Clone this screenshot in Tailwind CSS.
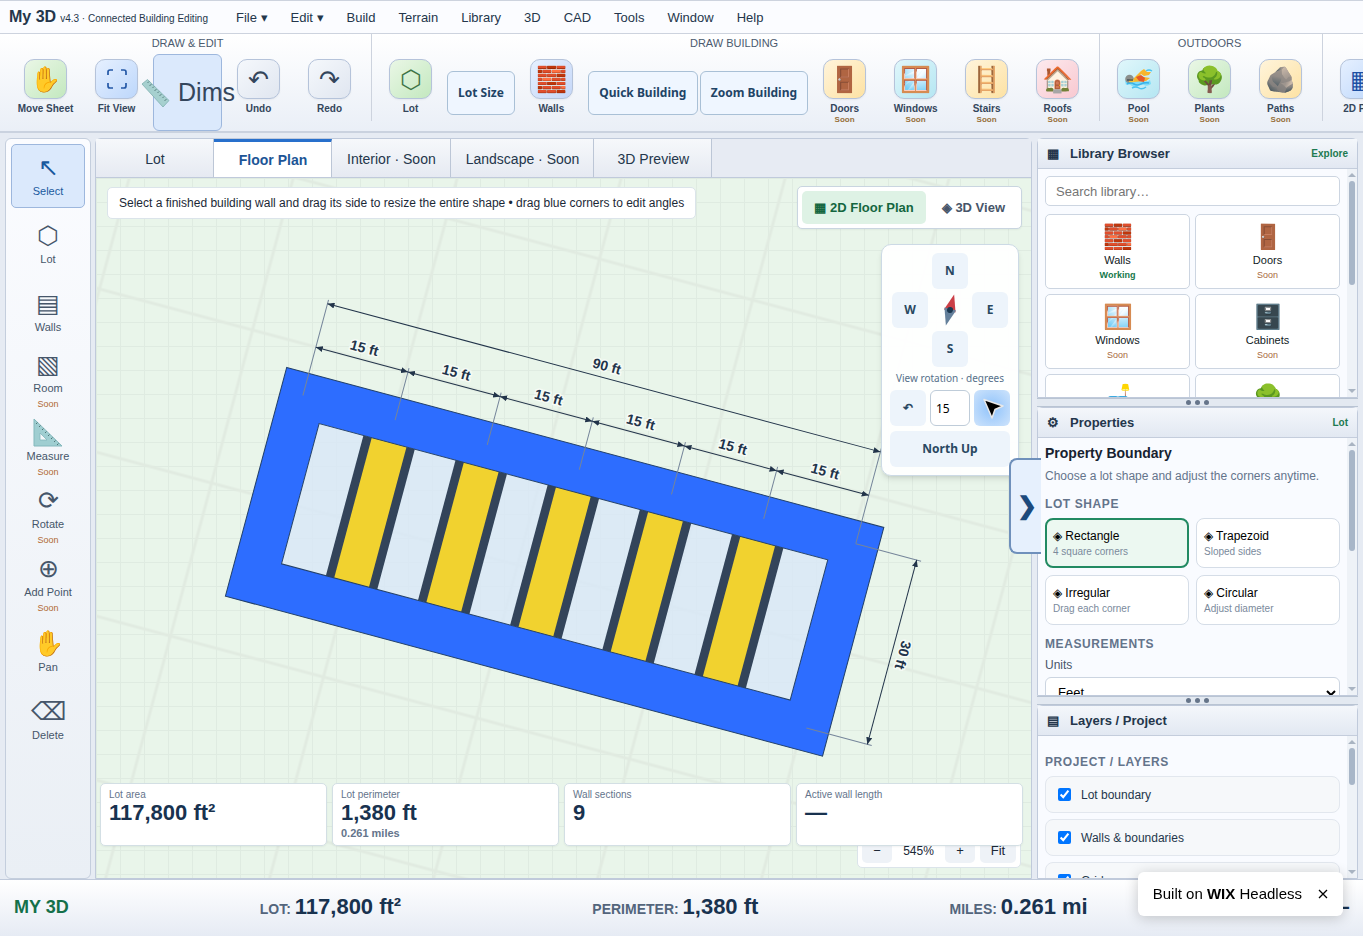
<!DOCTYPE html>
<html lang="en">
<head>
    <meta charset="UTF-8">
    <meta name="viewport" content="width=device-width, initial-scale=1.0">
    <title>My 3D</title>
    <script src="https://cdn.jsdelivr.net/npm/@tailwindcss/browser@4"></script>
</head>
<body class="h-screen flex flex-col overflow-hidden bg-[#e6ebf3] font-['Liberation_Sans',Arial,sans-serif] text-[#24364b]">

    <!-- Menu bar -->
    <header class="flex items-center h-[34px] shrink-0 border-y border-[#cdd3de] bg-[#fbfcff] pl-[9px]">
        <h1 class="text-base font-bold">My 3D</h1>
        <span class="ml-1 mt-0.5 text-[10px] whitespace-nowrap">v4.3 · Connected Building Editing</span>
        <nav class="flex gap-[23px] ml-7 mt-px text-[13px] whitespace-nowrap">
            <button>File ▾</button>
            <button>Edit ▾</button>
            <button>Build</button>
            <button>Terrain</button>
            <button>Library</button>
            <button>3D</button>
            <button>CAD</button>
            <button>Tools</button>
            <button>Window</button>
            <button>Help</button>
        </nav>
    </header>

    <!-- Ribbon -->
    <div class="flex h-[99px] shrink-0 overflow-hidden border-b-2 border-[#cad2df] bg-linear-to-b from-white to-[#eaeff7] pl-[7px] text-[10px] font-bold text-[#34465c]">
        <section class="h-[87px] shrink-0 border-r border-[#cdd3de] pl-1 pr-[7px]">
            <h2 class="h-5 leading-[18px] text-center text-[11px] font-normal text-[#4b5a6e]">DRAW &amp; EDIT</h2>
            <div class="flex gap-0.5">
                <button class="flex flex-col items-center w-[69px] pt-[5px]">
                    <span class="flex items-center justify-center w-[43px] h-10 rounded-[10px] border border-[#b5c3da] bg-linear-to-br from-[#eaf7e6] to-[#c3e8bf] text-[25px] font-normal leading-none shadow-xs">✋</span>
                    <span class="leading-5 whitespace-nowrap">Move Sheet</span>
                </button>
                <button class="flex flex-col items-center w-[69px] pt-[5px]">
                    <span class="flex items-center justify-center w-[43px] h-10 rounded-[10px] border border-[#b5c3da] bg-linear-to-br from-[#e6f0ff] to-[#bdd7fb] text-[#2458a6] shadow-xs">
                        <svg class="w-[22px] h-[22px]" viewBox="0 0 22 22" fill="none" stroke="currentColor" stroke-width="1.7"><path d="M2 7V4q0-2 2-2H7M15 2h3q2 0 2 2V7M20 15v3q0 2-2 2H15M7 20H4q-2 0-2-2V15"/></svg>
                    </span>
                    <span class="leading-5">Fit View</span>
                </button>
                <button class="flex items-center justify-center w-[69px] h-[77px] rounded-md border border-[#9db7dd] bg-[#dbe9fc] text-[25px] font-normal whitespace-nowrap">
                    <svg class="w-[31px] h-[30px] shrink-0 mr-[7px]" viewBox="0 0 31 30">
                        <path d="M2 6L7.500 1.500L29 22.500L23 29Z" fill="#a6d0cf" stroke="#7fb0b0" stroke-width=".8"/>
                        <path d="M9 3.500L7.500 5M11.500 6L9.500 8M14 8.500L12.500 10M16.500 11L14.500 13M19 13.500L17.500 15M21.500 16L19.500 18M24 18.500L22.500 20M26.500 21L24.500 23" stroke="#4f7678" stroke-width=".9"/>
                    </svg>Dims
                </button>
                <button class="flex flex-col items-center w-[69px] pt-[5px]">
                    <span class="flex items-center justify-center w-[43px] h-10 rounded-[10px] border border-[#b5c3da] bg-linear-to-br from-[#f5f8fc] to-[#e0e6f0] text-[25px] font-normal leading-none shadow-xs">↶</span>
                    <span class="leading-5">Undo</span>
                </button>
                <button class="flex flex-col items-center w-[69px] pt-[5px]">
                    <span class="flex items-center justify-center w-[43px] h-10 rounded-[10px] border border-[#b5c3da] bg-linear-to-br from-[#f5f8fc] to-[#e0e6f0] text-[25px] font-normal leading-none shadow-xs">↷</span>
                    <span class="leading-5">Redo</span>
                </button>
            </div>
        </section>
        <section class="h-[87px] shrink-0 border-r border-[#cdd3de] pl-1 pr-[7px]">
            <h2 class="h-5 leading-[18px] text-center text-[11px] font-normal text-[#4b5a6e]">DRAW BUILDING</h2>
            <div class="flex items-start gap-0.5">
                <button class="flex flex-col items-center w-[69px] pt-[5px]">
                    <span class="flex items-center justify-center w-[43px] h-10 rounded-[10px] border border-[#b5c3da] bg-linear-to-br from-[#eaf7e6] to-[#c3e8bf] text-[25px] font-normal leading-none text-[#3e7446] shadow-xs">⬡</span>
                    <span class="leading-5">Lot</span>
                </button>
                <button class="mt-[17px] h-11 px-2.5 rounded-md border border-[#a9c0d6] bg-[#eff6ff] font-['Noto_Sans',sans-serif] text-xs font-bold text-[#1f4466] whitespace-nowrap">Lot Size</button>
                <button class="flex flex-col items-center w-[69px] pt-[5px]">
                    <span class="flex items-center justify-center w-[43px] h-10 rounded-[10px] border border-[#b5c3da] bg-linear-to-br from-[#e6f0ff] to-[#c5d7f8] text-[25px] font-normal leading-none shadow-xs">🧱</span>
                    <span class="leading-5">Walls</span>
                </button>
                <button class="min-w-[110px] mt-[17px] h-11 px-2.5 rounded-md border border-[#a9c0d6] bg-[#eff6ff] font-['Noto_Sans',sans-serif] text-xs font-bold text-[#1f4466] whitespace-nowrap">Quick Building</button>
                <button class="min-w-[108px] mt-[17px] h-11 px-2.5 rounded-md border border-[#a9c0d6] bg-[#eff6ff] font-['Noto_Sans',sans-serif] text-xs font-bold text-[#1f4466] whitespace-nowrap">Zoom Building</button>
                <button class="flex flex-col items-center w-[69px] pt-[5px]">
                    <span class="flex items-center justify-center w-[43px] h-10 rounded-[10px] border border-[#b5c3da] bg-linear-to-br from-[#fff4db] to-[#fde2a3] text-[25px] font-normal leading-none shadow-xs">🚪</span>
                    <span class="leading-5">Doors</span>
                    <small class="text-[8px] leading-0.5 text-[#96703a]">Soon</small>
                </button>
                <button class="flex flex-col items-center w-[69px] pt-[5px]">
                    <span class="flex items-center justify-center w-[43px] h-10 rounded-[10px] border border-[#b5c3da] bg-linear-to-br from-[#e0f7fb] to-[#b5e6f2] text-[25px] font-normal leading-none shadow-xs">🪟</span>
                    <span class="leading-5">Windows</span>
                    <small class="text-[8px] leading-0.5 text-[#96703a]">Soon</small>
                </button>
                <button class="flex flex-col items-center w-[69px] pt-[5px]">
                    <span class="flex items-center justify-center w-[43px] h-10 rounded-[10px] border border-[#b5c3da] bg-linear-to-br from-[#fff4db] to-[#fde2a3] text-[25px] font-normal leading-none shadow-xs">🪜</span>
                    <span class="leading-5">Stairs</span>
                    <small class="text-[8px] leading-0.5 text-[#96703a]">Soon</small>
                </button>
                <button class="flex flex-col items-center w-[69px] pt-[5px]">
                    <span class="flex items-center justify-center w-[43px] h-10 rounded-[10px] border border-[#b5c3da] bg-linear-to-br from-[#fdeaee] to-[#f8c8d0] text-[25px] font-normal leading-none shadow-xs">🏠</span>
                    <span class="leading-5">Roofs</span>
                    <small class="text-[8px] leading-0.5 text-[#96703a]">Soon</small>
                </button>
            </div>
        </section>
        <section class="h-[87px] shrink-0 border-r border-[#cdd3de] pl-1 pr-[7px]">
            <h2 class="h-5 leading-[18px] text-center text-[11px] font-normal text-[#4b5a6e]">OUTDOORS</h2>
            <div class="flex gap-0.5">
                <button class="flex flex-col items-center w-[69px] pt-[5px]">
                    <span class="flex items-center justify-center w-[43px] h-10 rounded-[10px] border border-[#b5c3da] bg-linear-to-br from-[#e0f7fb] to-[#b5e6f2] shadow-xs">
                        <svg class="w-[29px] h-[22px]" viewBox="0 0 29 22">
                            <path d="M1 13q3-2 6 0t6 0t6 0t7-1l1 4q-4 3-7 1t-6 1t-6 0t-6-1Z" fill="#7fdcf8"/>
                            <path d="M22 3q3-2 6 0M8 20q4-2 7 0t7-1" fill="none" stroke="#4cc3f0" stroke-width="1.5"/>
                            <path d="M9 11L17 3L20 1L23 4L27 4L25 7L20 8L17 6L14 11L20 9L26 10L22 13L10 14Z" fill="#f7b52c"/>
                            <path d="M12 9L17 7L21 10L20 14L15 13Z" fill="#e4582b"/>
                            <circle cx="5.500" cy="11" r="4.300" fill="#8b8f8c"/>
                            <path d="M5 12q3-3 6 1q-3 3-6 1Z" fill="#f4c63a"/>
                            <path d="M3 12h6" stroke="#48515a" stroke-width="1.500"/>
                            <path d="M3 16q4-2 7 0t7 0t8-1" fill="none" stroke="#39b4ea" stroke-width="1.600"/>
                        </svg>
                    </span>
                    <span class="leading-5">Pool</span>
                    <small class="text-[8px] leading-0.5 text-[#96703a]">Soon</small>
                </button>
                <button class="flex flex-col items-center w-[69px] pt-[5px]">
                    <span class="flex items-center justify-center w-[43px] h-10 rounded-[10px] border border-[#b5c3da] bg-linear-to-br from-[#eaf7e6] to-[#c3e8bf] text-[25px] font-normal leading-none shadow-xs">🌳</span>
                    <span class="leading-5">Plants</span>
                    <small class="text-[8px] leading-0.5 text-[#96703a]">Soon</small>
                </button>
                <button class="flex flex-col items-center w-[69px] pt-[5px]">
                    <span class="flex items-center justify-center w-[43px] h-10 rounded-[10px] border border-[#b5c3da] bg-linear-to-br from-[#fff4db] to-[#fde2a3] text-[25px] font-normal leading-none shadow-xs">🪨</span>
                    <span class="leading-5">Paths</span>
                    <small class="text-[8px] leading-0.5 text-[#96703a]">Soon</small>
                </button>
            </div>
        </section>
        <section class="h-[87px] shrink-0 pl-1 pt-5">
            <button class="flex flex-col items-center w-[69px] pt-[5px]">
                <span class="flex items-center justify-center w-[43px] h-10 rounded-[10px] border border-[#b5c3da] bg-linear-to-br from-[#e6f0ff] to-[#bdd7fb] text-[25px] font-normal leading-none text-[#1d4fa3] shadow-xs">▦</span>
                <span class="leading-5">2D Plan</span>
            </button>
        </section>
    </div>

    <!-- Workspace -->
    <div class="flex flex-1 min-h-0 pt-[5px] px-[5px]">

        <!-- Tools -->
        <aside class="flex flex-col gap-1 w-[86px] shrink-0 p-[5px] rounded-md border border-[#c4cedd] bg-linear-to-b from-[#fbfcff] to-[#eaeff5] text-[11px] text-[#46566a]">
            <button class="flex flex-col items-center justify-center h-16 rounded-[5px] border border-[#9db7dd] bg-[#dbe9fc] text-[#1a5a9e]">
                <span class="text-[25px] leading-[31px]">↖</span>
                <span class="leading-[17px]">Select</span>
            </button>
            <button class="flex flex-col items-center justify-center h-16">
                <span class="text-[25px] leading-[31px]">⬡</span>
                <span class="leading-[17px]">Lot</span>
            </button>
            <button class="flex flex-col items-center justify-center h-16">
                <span class="text-[25px] leading-[31px]">▤</span>
                <span class="leading-[17px]">Walls</span>
            </button>
            <button class="flex flex-col items-center justify-center h-16">
                <span class="text-[25px] leading-[33px]">▧</span>
                <span class="leading-[15px]">Room</span>
                <small class="text-[9px] leading-[16px] text-[#b06a35]">Soon</small>
            </button>
            <button class="flex flex-col items-center justify-center h-16">
                <svg class="w-[30px] h-[33px] shrink-0" viewBox="0 0 30 33">
                    <path d="M1 3V30H29Z" fill="#9fced1" stroke="#83b8bc"/>
                    <path d="M7 17V24H14Z" fill="#f4f8fb" stroke="#83b8bc" stroke-width=".800"/>
                    <path d="M3 8l1.500-1.500M6 11l1.500-1.500M9 14l1.500-1.500M12 17l1.500-1.500M15 20l1.500-1.500M18 23l1.500-1.500M21 26l1.500-1.500M24 29l1.500-1.500" stroke="#4f7678"/>
                </svg>
                <span class="leading-[15px]">Measure</span>
                <small class="text-[9px] leading-[16px] text-[#b06a35]">Soon</small>
            </button>
            <button class="flex flex-col items-center justify-center h-16">
                <span class="text-[25px] leading-[33px]">⟳</span>
                <span class="leading-[15px]">Rotate</span>
                <small class="text-[9px] leading-[16px] text-[#b06a35]">Soon</small>
            </button>
            <button class="flex flex-col items-center justify-center h-16">
                <span class="text-[25px] leading-[33px]">⊕</span>
                <span class="leading-[15px]">Add Point</span>
                <small class="text-[9px] leading-[16px] text-[#b06a35]">Soon</small>
            </button>
            <button class="flex flex-col items-center justify-center h-16">
                <span class="text-[25px] leading-[31px]">✋</span>
                <span class="leading-[17px]">Pan</span>
            </button>
            <button class="flex flex-col items-center justify-center h-16">
                <span class="text-[25px] leading-[31px]">⌫</span>
                <span class="leading-[17px]">Delete</span>
            </button>
        </aside>

        <!-- Drawing area -->
        <main class="relative flex flex-col flex-1 min-w-0 ml-1 mr-[5px] rounded-t-md border border-[#c0cadb]">
            <div class="flex h-[39px] shrink-0 border-b border-[#c0cadb] bg-[#e7ebf3] text-sm whitespace-nowrap">
                <button class="min-w-[118px] pl-[15px] pr-3.5 pt-0.5 border-r border-[#bcc6d6] bg-linear-to-b from-[#f6f8fb] to-[#e6eaf2]">Lot</button>
                <button class="min-w-[118px] pl-[15px] pr-3.5 border-r border-t-3 border-r-[#bcc6d6] border-t-[#2870cc] bg-white font-bold text-[#1c5596]">Floor Plan</button>
                <button class="min-w-[118px] pl-[15px] pr-3.5 pt-0.5 border-r border-[#bcc6d6] bg-linear-to-b from-[#f6f8fb] to-[#e6eaf2]">Interior · Soon</button>
                <button class="min-w-[118px] pl-[15px] pr-3.5 pt-0.5 border-r border-[#bcc6d6] bg-linear-to-b from-[#f6f8fb] to-[#e6eaf2]">Landscape · Soon</button>
                <button class="min-w-[118px] pl-[15px] pr-3.5 pt-0.5 border-r border-[#bcc6d6] bg-linear-to-b from-[#f6f8fb] to-[#e6eaf2]">3D Preview</button>
            </div>

            <div class="relative flex-1 min-h-0 overflow-hidden bg-[#e9f5ea]">
                <svg class="absolute inset-0 w-full h-full" font-family="Liberation Sans, Arial, sans-serif">
                    <defs>
                        <pattern id="fine" width="24" height="24" patternUnits="userSpaceOnUse">
                            <path d="M.5 0V24M0 .5H24" stroke="#dfebe1"/>
                        </pattern>
                        <pattern id="coarse" width="158.4" height="158.4" patternUnits="userSpaceOnUse" patternTransform="translate(3.5 111) rotate(15)">
                            <path d="M0 0H158.4M0 0V158.4M0 158.4H158.4M158.4 0V158.4" stroke="#e1ebe1" stroke-width="3"/>
                        </pattern>
                        <marker id="arrow" viewBox="0 0 7 6" refX="7" refY="3" markerWidth="7" markerHeight="6" markerUnits="userSpaceOnUse" orient="auto-start-reverse">
                            <path d="M0 0L7 3L0 6Z" fill="#22344a"/>
                        </marker>
                        <g id="wall">
                            <rect x="-26.6" y="22.9" width="53.2" height="145.2" fill="#33445a"/>
                            <rect x="-18" y="22.9" width="36" height="145.2" fill="#f1d22f"/>
                        </g>
                        <g id="dim">
                            <path d="M0-50H95.4" stroke="#22344a" marker-start="url(#arrow)" marker-end="url(#arrow)"/>
                            <text x="47" y="-57" text-anchor="middle" font-size="14" font-weight="bold" fill="#22344a" stroke="#f6fbf6" stroke-width="3" paint-order="stroke">15 ft</text>
                        </g>
                    </defs>
                    <rect width="100%" height="100%" fill="url(#fine)"/>
                    <rect width="100%" height="100%" fill="url(#coarse)"/>
                    <!-- building, 90 x 30 ft -->
                    <g transform="translate(206.9 217.5) rotate(15)">
                        <path d="M-22.9-22.9H595.3V213.9H-22.9ZM22.9 22.9V168.1H549.5V22.9Z" fill="#2d6dff"/>
                        <rect x="22.9" y="22.9" width="526.6" height="145.2" fill="#d8e7f8" fill-opacity=".8"/>
                        <use href="#wall" x="95.4"/>
                        <use href="#wall" x="190.8"/>
                        <use href="#wall" x="286.2"/>
                        <use href="#wall" x="381.6"/>
                        <use href="#wall" x="477"/>
                        <path d="M-22.9-22.9H595.3V213.9H-22.9ZM22.9 22.9V168.1H549.5V22.9Z" fill="none" stroke="#22406a"/>
                        <path d="M0 0V-99M95.4 0V-54M190.8 0V-54M286.2 0V-54M381.6 0V-54M477 0V-54M572.4 0V-99M572.4 0H640M572.4 190.8H640" stroke="#75859a" fill="none"/>
                        <use href="#dim"/>
                        <use href="#dim" x="95.4"/>
                        <use href="#dim" x="190.8"/>
                        <use href="#dim" x="286.2"/>
                        <use href="#dim" x="381.6"/>
                        <use href="#dim" x="477"/>
                        <path d="M0-95H572.4" stroke="#22344a" marker-start="url(#arrow)" marker-end="url(#arrow)"/>
                        <path d="M635.5 0V190.8" stroke="#22344a" marker-start="url(#arrow)" marker-end="url(#arrow)"/>
                        <g font-size="14" font-weight="bold" fill="#22344a" stroke="#f6fbf6" stroke-width="3" paint-order="stroke" text-anchor="middle">
                            <text x="286" y="-102">90 ft</text>
                            <text transform="translate(642 95.4) rotate(90)">30 ft</text>
                        </g>
                    </g>
                </svg>

                <p class="absolute left-[11px] top-[9px] h-8 px-[11px] leading-[30px] rounded-[5px] border border-[#dbe4ea] bg-white text-xs text-[#1b2836] whitespace-nowrap">Select a finished building wall and drag its side to resize the entire shape • drag blue corners to edit angles</p>

                <div class="absolute right-[9px] top-2 flex gap-1 p-1 rounded-[5px] border border-[#c9d5e0] bg-white text-[13px] font-bold shadow-xs whitespace-nowrap">
                    <button class="h-[33px] px-3 rounded-[5px] bg-[#def2e5] text-[#14663f]">▦ 2D Floor Plan</button>
                    <button class="h-[33px] px-3 text-[#475569]">◈ 3D View</button>
                </div>

                <!-- Compass -->
                <div class="absolute right-3 top-[66px] w-[138px] p-2 rounded-[10px] border border-[#ccdae5] bg-white/95 shadow-md font-['Noto_Sans',sans-serif] text-xs font-bold text-[#294861]">
                    <div class="grid grid-cols-3 gap-x-1 gap-y-[3px] w-[116px] mx-auto">
                        <button class="col-start-2 h-9 rounded-md bg-[#edf4fb]">N</button>
                        <button class="col-start-1 h-9 rounded-md bg-[#edf4fb]">W</button>
                        <svg class="w-9 h-9" viewBox="-18 -18 36 36">
                            <g transform="rotate(15)">
                                <path d="M0-16L6 1H-6Z" fill="#cb3f47"/>
                                <path d="M0 16L6-1H-6Z" fill="#64809b"/>
                                <circle r="3" fill="#1c3850"/>
                            </g>
                        </svg>
                        <button class="h-9 rounded-md bg-[#edf4fb]">E</button>
                        <button class="col-start-2 h-9 rounded-md bg-[#edf4fb]">S</button>
                    </div>
                    <label for="rotation" class="block h-[23px] leading-[23px] text-center text-[10px] font-normal text-[#56708a]">View rotation · degrees</label>
                    <div class="flex gap-1">
                        <button class="w-9 h-9 rounded-md bg-[#edf4fb]">↶</button>
                        <input id="rotation" type="text" value="15" class="w-10 h-9 px-[5px] rounded-md border border-[#bfccd9] bg-white font-normal text-black">
                        <button aria-label="Rotate right" class="flex items-center justify-center w-9 h-9 rounded-md bg-radial from-[#8ec2fb] to-[#cfe4fb]">
                            <svg class="w-6 h-6" viewBox="0 0 24 24"><path d="M4 3.5L23 10L15 13.500L12 22Z" fill="#000" stroke="#e9e9e9" stroke-width="1.5" stroke-linejoin="round"/></svg>
                        </button>
                    </div>
                    <button class="w-full h-9 mt-[5px] rounded-md bg-[#edf4fb]">North Up</button>
                </div>

                <!-- Zoom -->
                <div class="absolute right-2.5 bottom-2.5 flex items-center p-1 rounded-[5px] border border-[#dbe4ea] bg-white text-[13px] text-[#1b2836]">
                    <button class="w-[30px] h-[25px] rounded-[5px] bg-[#eef2f7]">−</button>
                    <span class="w-[53px] text-center text-xs">545%</span>
                    <button class="w-[30px] h-[25px] rounded-[5px] bg-[#eef2f7]">+</button>
                    <button class="w-9 h-[25px] ml-[5px] rounded-[5px] bg-[#eef2f7]">Fit</button>
                </div>

                <!-- Stats -->
                <div class="absolute left-1 right-2 bottom-8 grid grid-cols-4 gap-[5px] text-[10px] text-[#64748b]">
                    <div class="h-[63px] px-2 pt-1 rounded-[5px] border border-[#d3dfe4] bg-white/98 shadow-xs">
                        <p class="leading-[14px]">Lot area</p>
                        <p class="text-[22px] leading-[22px] font-bold text-[#18324f]">117,800 ft²</p>
                    </div>
                    <div class="h-[63px] px-2 pt-1 rounded-[5px] border border-[#d3dfe4] bg-white/98 shadow-xs">
                        <p class="leading-[14px]">Lot perimeter</p>
                        <p class="text-[22px] leading-[22px] font-bold text-[#18324f]">1,380 ft</p>
                        <p class="text-[11px] leading-[18px] font-bold">0.261 miles</p>
                    </div>
                    <div class="h-[63px] px-2 pt-1 rounded-[5px] border border-[#d3dfe4] bg-white/98 shadow-xs">
                        <p class="leading-[14px]">Wall sections</p>
                        <p class="text-[22px] leading-[22px] font-bold text-[#18324f]">9</p>
                    </div>
                    <div class="h-[63px] px-2 pt-1 rounded-[5px] border border-[#d3dfe4] bg-white/98 shadow-xs">
                        <p class="leading-[14px]">Active wall length</p>
                        <p class="text-[22px] leading-[22px] font-bold text-[#18324f]">—</p>
                    </div>
                </div>
            </div>

            <button aria-label="Hide panels" class="absolute z-10 -right-2.5 top-[319px] w-8 h-24 pl-0.5 rounded-l-lg border-2 border-r-0 border-[#6f90bb] bg-[#e6f0fd] text-2xl font-bold text-[#1c4a7c]">❯</button>
        </main>

        <!-- Panels -->
        <aside class="flex flex-col w-[321px] shrink-0">
            <section class="flex flex-col flex-[260] min-h-0 rounded-t-md border border-[#c0cadb] bg-[#f9fbff]">
                <div class="flex items-center h-[30px] shrink-0 px-[9px] border-b border-[#c4cddc] bg-linear-to-b from-[#f4f7fb] to-[#e2e8f2] text-[13px] font-bold">
                    <span class="w-[23px]">▦</span>
                    <h2>Library Browser</h2>
                    <span class="ml-auto text-[10px] text-[#1c7a50]">Explore</span>
                </div>
                <div class="flex flex-1 min-h-0">
                    <div class="flex-1 overflow-hidden px-[7px] pt-[7px] text-center text-[11px] text-[#111a24]">
                        <input type="search" aria-label="Search library" placeholder="Search library…" class="w-full h-[30px] px-2.5 rounded-[5px] border border-[#ccd5e1] bg-white text-[13px] placeholder:text-[#757575]">
                        <div class="grid grid-cols-2 gap-[5px] mt-2">
                            <button class="flex flex-col items-center h-[75px] pt-1.5 rounded-[5px] border border-[#ccd5e1] bg-white">
                                <span class="text-2xl leading-8">🧱</span>
                                <span class="leading-[15px]">Walls</span>
                                <b class="text-[9px] leading-[14px] text-[#15784c]">Working</b>
                            </button>
                            <button class="flex flex-col items-center h-[75px] pt-1.5 rounded-[5px] border border-[#ccd5e1] bg-white">
                                <span class="text-2xl leading-8">🚪</span>
                                <span class="leading-[15px]">Doors</span>
                                <small class="text-[9px] leading-[14px] text-[#a8693c]">Soon</small>
                            </button>
                            <button class="flex flex-col items-center h-[75px] pt-1.5 rounded-[5px] border border-[#ccd5e1] bg-white">
                                <span class="text-2xl leading-8">🪟</span>
                                <span class="leading-[15px]">Windows</span>
                                <small class="text-[9px] leading-[14px] text-[#a8693c]">Soon</small>
                            </button>
                            <button class="flex flex-col items-center h-[75px] pt-1.5 rounded-[5px] border border-[#ccd5e1] bg-white">
                                <span class="text-2xl leading-8">🗄️</span>
                                <span class="leading-[15px]">Cabinets</span>
                                <small class="text-[9px] leading-[14px] text-[#a8693c]">Soon</small>
                            </button>
                            <button aria-label="Furniture" class="flex flex-col items-center h-[75px] pt-1.5 rounded-[5px] border border-[#ccd5e1] bg-white">
                                <span class="text-2xl leading-8">🛋️</span>
                            </button>
                            <button aria-label="Plants" class="flex flex-col items-center h-[75px] pt-1.5 rounded-[5px] border border-[#ccd5e1] bg-white">
                                <span class="text-2xl leading-8">🌳</span>
                            </button>
                        </div>
                    </div>
                    <div class="flex flex-col items-center w-2.5 bg-[#eef2f7]">
                        <i class="mt-1 border-4 border-t-0 border-transparent border-b-[#a9b4c2]"></i>
                        <i class="w-1.5 h-[104px] mt-1 rounded-full bg-[#a8b6c8]"></i>
                        <i class="mt-auto mb-1 border-4 border-b-0 border-transparent border-t-[#a9b4c2]"></i>
                    </div>
                </div>
            </section>

            <div class="flex items-center justify-center gap-1 h-[9px] shrink-0 border-y border-[#b9c4d3] bg-[#e3e9f1]">
                <i class="w-[5px] h-[5px] rounded-full bg-[#66758a]"></i>
                <i class="w-[5px] h-[5px] rounded-full bg-[#66758a]"></i>
                <i class="w-[5px] h-[5px] rounded-full bg-[#66758a]"></i>
            </div>

            <section class="flex flex-col flex-[290] min-h-0 rounded-t-md border border-[#c0cadb] bg-[#f9fbff]">
                <div class="flex items-center h-[30px] shrink-0 px-[9px] border-b border-[#c4cddc] bg-linear-to-b from-[#f4f7fb] to-[#e2e8f2] text-[13px] font-bold">
                    <span class="w-[23px]">⚙</span>
                    <h2>Properties</h2>
                    <span class="ml-auto text-[10px] text-[#1c7a50]">Lot</span>
                </div>
                <div class="flex flex-1 min-h-0">
                    <div class="flex-1 overflow-hidden px-[7px] pt-[7px] text-xs text-[#64748b]">
                        <h3 class="text-sm leading-4 font-bold text-[#172230]">Property Boundary</h3>
                        <p class="mt-[7px] leading-4">Choose a lot shape and adjust the corners anytime.</p>
                        <h4 class="mt-3 leading-4 font-bold tracking-wider">LOT SHAPE</h4>
                        <div class="grid grid-cols-2 gap-[7px] mt-1.5 text-[10px] text-[#7b8a9c]">
                            <button class="h-[50px] px-[6px] pt-0.5 text-left rounded-lg border-2 border-[#228a62] bg-[#ecf8f1]">
                                <span class="block text-xs leading-4 text-black">◈ Rectangle</span>
                                <span class="block leading-[15px]">4 square corners</span>
                            </button>
                            <button class="h-[50px] px-[7px] pt-0.5 text-left rounded-lg border border-[#d5dde7] bg-white">
                                <span class="block text-xs leading-4 text-black">◈ Trapezoid</span>
                                <span class="block leading-[15px]">Sloped sides</span>
                            </button>
                            <button class="h-[50px] px-[7px] pt-0.5 text-left rounded-lg border border-[#d5dde7] bg-white">
                                <span class="block text-xs leading-4 text-black">◈ Irregular</span>
                                <span class="block leading-[15px]">Drag each corner</span>
                            </button>
                            <button class="h-[50px] px-[7px] pt-0.5 text-left rounded-lg border border-[#d5dde7] bg-white">
                                <span class="block text-xs leading-4 text-black">◈ Circular</span>
                                <span class="block leading-[15px]">Adjust diameter</span>
                            </button>
                        </div>
                        <h4 class="mt-[11px] leading-4 font-bold tracking-wider">MEASUREMENTS</h4>
                        <label for="units" class="block mt-[5px] leading-4 text-[#475569]">Units</label>
                        <select id="units" class="w-full h-8 mt-1 px-2 rounded-md border border-[#ccd5e1] bg-white text-[13px] text-black">
                            <option>Feet</option>
                        </select>
                    </div>
                    <div class="flex flex-col items-center w-2.5 bg-[#eef2f7]">
                        <i class="mt-1 border-4 border-t-0 border-transparent border-b-[#a9b4c2]"></i>
                        <i class="w-1.5 h-[101px] mt-1 rounded-full bg-[#a8b6c8]"></i>
                        <i class="mt-auto mb-1 border-4 border-b-0 border-transparent border-t-[#a9b4c2]"></i>
                    </div>
                </div>
            </section>

            <div class="flex items-center justify-center gap-1 h-[9px] shrink-0 border-y border-[#b9c4d3] bg-[#e3e9f1]">
                <i class="w-[5px] h-[5px] rounded-full bg-[#66758a]"></i>
                <i class="w-[5px] h-[5px] rounded-full bg-[#66758a]"></i>
                <i class="w-[5px] h-[5px] rounded-full bg-[#66758a]"></i>
            </div>

            <section class="flex flex-col flex-[173] min-h-0 rounded-t-md border border-[#c0cadb] bg-[#f9fbff]">
                <div class="flex items-center h-[30px] shrink-0 px-[9px] border-b border-[#c4cddc] bg-linear-to-b from-[#f4f7fb] to-[#e2e8f2] text-[13px] font-bold">
                    <span class="w-[23px]">▤</span>
                    <h2>Layers / Project</h2>
                </div>
                <div class="flex flex-1 min-h-0">
                    <div class="flex-1 overflow-hidden px-[7px] pt-[18px] text-xs">
                        <h4 class="leading-4 font-bold tracking-wider text-[#64748b]">PROJECT / LAYERS</h4>
                        <div class="flex flex-col gap-1.5 mt-1.5">
                            <label class="flex items-center gap-2.5 h-[37px] shrink-0 px-3 rounded-lg border border-[#e2e7ee] bg-[#f6f8fa]"><input type="checkbox" checked class="w-[13px] h-[13px]">Lot boundary</label>
                            <label class="flex items-center gap-2.5 h-[37px] shrink-0 px-3 rounded-lg border border-[#e2e7ee] bg-[#f6f8fa]"><input type="checkbox" checked class="w-[13px] h-[13px]">Walls &amp; boundaries</label>
                            <label class="flex items-center gap-2.5 h-[37px] shrink-0 px-3 rounded-lg border border-[#e2e7ee] bg-[#f6f8fa]"><input type="checkbox" checked class="w-[13px] h-[13px]">Grid</label>
                        </div>
                    </div>
                    <div class="flex flex-col items-center w-2.5 bg-[#eef2f7]">
                        <i class="mt-1 border-4 border-t-0 border-transparent border-b-[#a9b4c2]"></i>
                        <i class="w-1.5 h-[37px] mt-1 rounded-full bg-[#a8b6c8]"></i>
                        <i class="mt-auto mb-1 border-4 border-b-0 border-transparent border-t-[#a9b4c2]"></i>
                    </div>
                </div>
            </section>
        </aside>
    </div>

    <!-- Status bar -->
    <footer class="flex items-center justify-between h-[57px] shrink-0 px-3.5 pb-0.5 border-t border-[#c0cadb] bg-linear-to-b from-white to-[#e6ebf4] text-sm font-bold text-[#53657c] whitespace-nowrap">
        <span class="text-lg text-[#15704a]">MY 3D</span>
        <span>LOT: <b class="text-[22px] text-[#18324f]">117,800 ft²</b></span>
        <span>PERIMETER: <b class="text-[22px] text-[#18324f]">1,380 ft</b></span>
        <span>MILES: <b class="text-[22px] text-[#18324f]">0.261 mi</b></span>
        <span>WALL: <b class="text-[22px] text-[#18324f]">—</b></span>
    </footer>

    <div class="fixed z-20 right-5 bottom-5 flex items-center gap-[11px] h-11 pl-[15px] pr-2.5 rounded-md bg-white text-[15px] text-black shadow-[0_2px_14px_rgba(0,0,0,0.2)]">
        <a href="#">Built on <b>WIX</b> Headless</a>
        <button aria-label="Close" class="flex items-center justify-center w-5 h-5">
            <svg class="w-2.5 h-2.5" viewBox="0 0 10 10" stroke="#000" stroke-width="1.3"><path d="M1 1l8 8M9 1l-8 8"/></svg>
        </button>
    </div>
</body>
</html>
